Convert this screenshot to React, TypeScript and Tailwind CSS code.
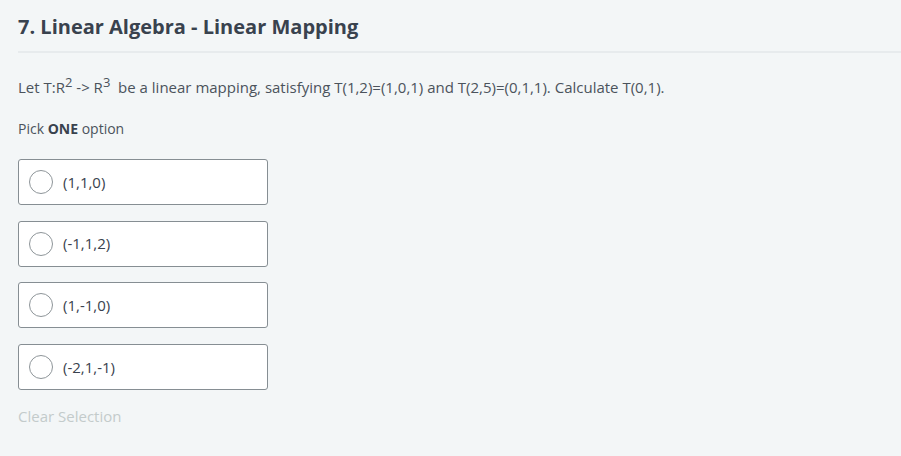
const OPTIONS = ['(1,1,0)', '(-1,1,2)', '(1,-1,0)', '(-2,1,-1)'];

function Radio() {
  return <span className="block h-[24px] w-[24px] shrink-0 rounded-full border border-[#8e9599] bg-white" />;
}

export default function App() {
  return (
    <div
      className="min-h-[456px] w-full bg-[#f3f6f7] text-[#39424e]"
      style={{ fontFamily: '"Open Sans", "Noto Sans", sans-serif' }}
    >
      <div className="pl-[18px]">
        <h1 className="pt-[13px] pb-[10px] text-[20px] font-bold leading-[28px]">
          7. Linear Algebra - Linear Mapping
        </h1>
        <div className="h-[2px] bg-[#e7ebed]" />

        <p className="mt-[24px] text-[15px] leading-[20px] text-[#4b535c]">
          Let T:R<sup className="text-[13px] leading-none">2</sup> -&gt; R
          <sup className="text-[13px] leading-none">3</sup>&nbsp; be a linear mapping, satisfying
          T(1,2)=(1,0,1) and T(2,5)=(0,1,1). Calculate T(0,1).
        </p>

        <p className="mt-[22px] text-[14px] leading-[20px] text-[#4b535c]">
          Pick <span className="font-bold text-[#39424e]">ONE</span> option
        </p>

        <div className="mt-[20px] flex flex-col gap-[15.6px]">
          {OPTIONS.map((opt) => (
            <label
              key={opt}
              className="flex h-[46px] w-[250px] items-center gap-[10px] rounded-[3px] border border-[#868e93] bg-white pl-[10px]"
            >
              <Radio />
              <span className="text-[15px] text-[#39424e]">{opt}</span>
            </label>
          ))}
        </div>

        <div className="mt-[16px] text-[15px] leading-[20px] text-[#c3cbcb]">Clear Selection</div>
      </div>
    </div>
  );
}
